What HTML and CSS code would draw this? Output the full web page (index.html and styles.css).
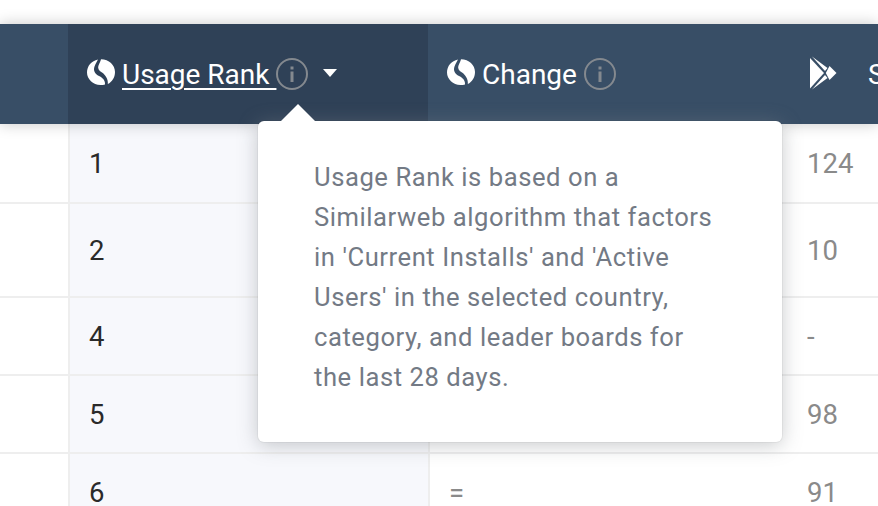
FILE: index.html
```html
<!DOCTYPE html>
<html lang="en">
<head>
    <meta charset="UTF-8">
    <title>Usage Rank</title>
    <link rel="stylesheet" href="styles.css">
</head>
<body>
    <div class="top-bar"></div>

    <div class="rank-table">
        <div class="head-row">
            <div class="head-cell"></div>
            <div class="head-cell active">
                <svg class="sw-logo" viewBox="0 0 28 26"><use href="#sw"/></svg>
                <a class="head-link" href="#">Usage Rank </a>
                <svg class="info-icon" viewBox="0 0 32 32"><use href="#info"/></svg>
                <span class="caret"></span>
            </div>
            <div class="head-cell">
                <svg class="sw-logo" viewBox="0 0 28 26"><use href="#sw"/></svg>
                <span class="head-text">Change </span>
                <svg class="info-icon" viewBox="0 0 32 32"><use href="#info"/></svg>
            </div>
            <div class="head-cell store">
                <svg class="play-logo" viewBox="0 0 27 34">
                    <path d="M0 2 L14 17 L0 32.500 Z"/>
                    <path d="M2 0.500 L17.500 12 L15 15 Z"/>
                    <path d="M15 19 L17.500 22 L2 33.500 Z"/>
                    <path d="M19.500 10 L26.500 17 L19.500 24 L15.800 17 Z"/>
                </svg>
                <span class="head-text">S</span>
            </div>
        </div>

        <div class="row row-a"><div class="cell"></div><div class="cell rank">1</div><div class="cell"></div><div class="cell num">124</div></div>
        <div class="row row-b"><div class="cell"></div><div class="cell rank">2</div><div class="cell"></div><div class="cell num">10</div></div>
        <div class="row row-c"><div class="cell"></div><div class="cell rank">4</div><div class="cell"></div><div class="cell num">-</div></div>
        <div class="row row-c"><div class="cell"></div><div class="cell rank">5</div><div class="cell"></div><div class="cell num">98</div></div>
        <div class="row row-last"><div class="cell"></div><div class="cell rank">6</div><div class="cell num">=</div><div class="cell num">91</div></div>

        <div class="tooltip">
            <span class="tooltip-arrow"></span>
            <p>Usage Rank is based on a Similarweb algorithm that factors in 'Current Installs' and 'Active Users' in the selected country, category, and leader boards for the last 28 days.</p>
        </div>
    </div>

    <svg class="icon-defs" width="0" height="0">
        <symbol id="sw" viewBox="0 0 28 26">
            <path d="M11 0.500 C4.500 1.800 0 7 0 13.500 C0 20 6 26 13.500 26 C15 26 16.800 25.800 18 25.400 C18.500 21 15 18.500 12 17 C8 15 6 11.500 7.500 7.500 C8.500 4.500 10 2.500 11 0.500 Z"/>
            <path d="M14 0.200 C22 0.200 28 6 28 13 C28 18.500 25 23 20.800 25 C21.500 20 18 15.500 15 13.500 C11.500 11.500 10.500 9 11.500 6.500 C12.500 4 13.500 2 14 0.200 Z"/>
        </symbol>
        <symbol id="info" viewBox="0 0 32 32">
            <circle cx="16" cy="16" r="15" fill="none" stroke="currentColor" stroke-width="2"/>
            <rect x="14.500" y="13.500" width="3" height="10.500" fill="currentColor"/>
            <rect x="14.500" y="8.500" width="3" height="3" fill="currentColor"/>
        </symbol>
    </svg>
</body>
</html>
```

FILE: styles.css
```css
body {
    margin: 0;
    height: 506px;
    overflow: hidden;
    background-color: #fff;
    font-family: Roboto, sans-serif;
}

.top-bar {
    height: 24px;
}

.rank-table {
    position: relative;
}

.icon-defs {
    position: absolute;
}

.head-row,
.row {
    display: grid;
}

.head-row {
    grid-template-columns: 68px 360px 360px 1fr;
    height: 100px;
    background-color: #384e66;
    color: #fff;
    box-shadow: 0 0 14px rgba(0, 0, 0, 0.22);
    position: relative;
}

.row {
    grid-template-columns: 68px 362px 358px 1fr;
    border-bottom: 2px solid #eeeeee;
    box-sizing: border-box;
}

.head-cell {
    display: flex;
    align-items: center;
    padding-left: 19px;
    font-size: 28px;
    white-space: nowrap;
}

.head-cell.active {
    background-color: #2f4157;
}

.head-cell.store {
    padding-left: 22px;
}

.sw-logo {
    width: 28px;
    height: 26px;
    margin-top: -4px;
    fill: #fff;
    flex: none;
}

.head-link {
    color: #fff;
    margin-left: 7px;
    white-space: pre;
    text-decoration: underline;
    text-decoration-thickness: 2px;
    text-underline-offset: 4px;
}

.head-text {
    margin-left: 7px;
    white-space: pre;
}

.store .head-text {
    margin-left: 31px;
}

.info-icon {
    width: 32px;
    height: 32px;
    color: #84898f;
    flex: none;
}

.caret {
    margin-left: 15px;
    margin-top: -3px;
    border-left: 7.500px solid transparent;
    border-right: 7.500px solid transparent;
    border-top: 8px solid #fff;
}

.play-logo {
    width: 27px;
    height: 34px;
    margin-top: -2px;
    fill: #fff;
    flex: none;
}

.row-a {
    height: 80px;
}

.row-b {
    height: 94px;
}

.row-c {
    height: 78px;
}

.row-last {
    height: 52px;
    border-bottom: none;
}

.cell {
    display: flex;
    align-items: center;
    padding-top: 2px;
    padding-left: 19px;
    font-size: 27.500px;
    line-height: 1;
}

.row-last .cell {
    align-items: flex-start;
    padding-top: 25px;
}

.rank {
    background-color: #f7f8fc;
    border-left: 2px solid #eeeeee;
    border-right: 2px solid #eeeeee;
    color: #2a2a2a;
}

.num {
    color: #8a8a8a;
}

.tooltip {
    position: absolute;
    left: 258px;
    top: 97px;
    width: 524px;
    height: 321px;
    box-sizing: border-box;
    padding: 36px 63px 0 56px;
    background-color: #fff;
    border-radius: 6px;
    box-shadow: 0 0 0 1px rgba(0, 0, 0, 0.04), 0 3px 20px rgba(130, 135, 140, 0.45);
}

.tooltip p {
    margin: 0;
    font-size: 25.600px;
    line-height: 40px;
    letter-spacing: 0.56px;
    color: #737a85;
}

.tooltip-arrow {
    position: absolute;
    left: 23px;
    top: -17px;
    border-left: 17px solid transparent;
    border-right: 17px solid transparent;
    border-bottom: 17px solid #fff;
}
```
